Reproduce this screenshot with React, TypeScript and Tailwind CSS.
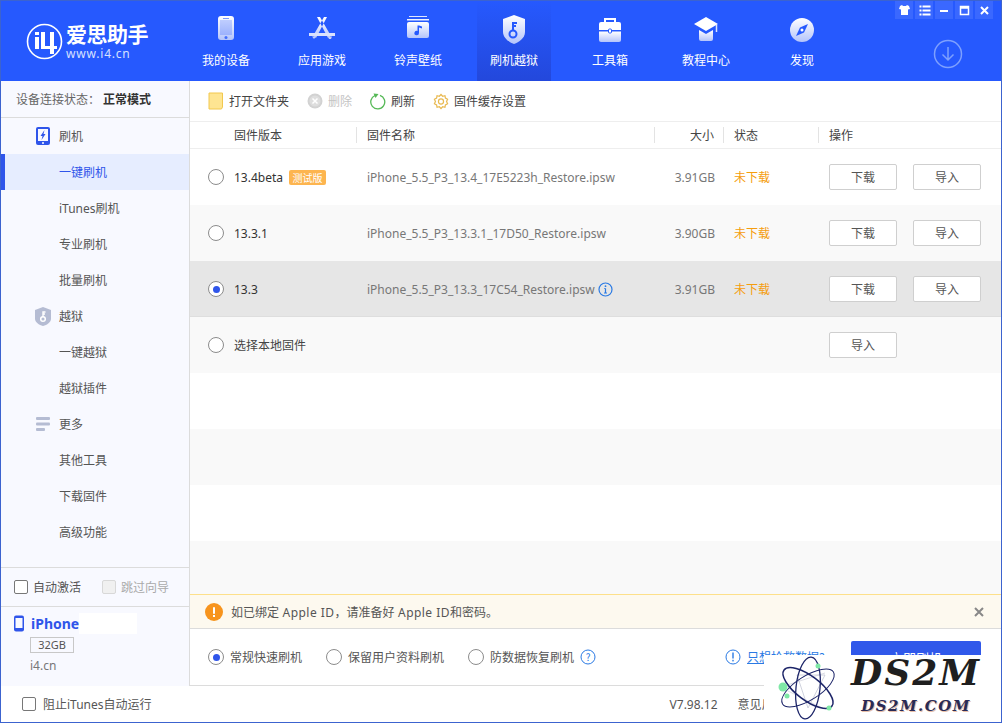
import React from "react";

const font = { fontFamily: '"Noto Sans CJK SC", "Noto Sans", sans-serif' };

function L({ children, cls = "" }: { children: React.ReactNode; cls?: string }) {
  return <span className={`font-['Noto_Sans'] ${cls}`}>{children}</span>;
}

function G({ id }: { id: string }) {
  return (
    <defs>
      <linearGradient id={id} x1="0" y1="0" x2="0" y2="1">
        <stop offset="0" stopColor="#ffffff" />
        <stop offset="1" stopColor="#b4c4fb" />
      </linearGradient>
    </defs>
  );
}

const navIcons: React.ReactNode[] = [
  <svg key="a" width="32" height="32" viewBox="0 0 32 32">
    <G id="g1" />
    <rect x="8" y="2" width="16" height="24" rx="3" fill="url(#g1)" />
    <rect x="10" y="6" width="12" height="15" fill="#2659fe" opacity=".25" />
    <rect x="13" y="4" width="6" height="1" fill="#2659fe" opacity=".6" />
    <circle cx="16" cy="23.500" r="1.500" fill="#2659fe" opacity=".8" />
  </svg>,
  <svg key="b" width="32" height="32" viewBox="0 0 32 32" fill="none">
    <G id="g2" />
    <path d="M11 3l3 0 11 19-3 2zM21 3l-3 0L7 22l3 2z" fill="url(#g2)" />
    <path d="M3 19h26v3H3z" fill="#d9e1fd" />
    <path d="M6 22.500h4l-2 2.500zM22 22.500h4l-1 2.500h-2z" fill="#c2cefc" />
  </svg>,
  <svg key="c" width="32" height="32" viewBox="0 0 32 32">
    <G id="g3" />
    <rect x="7" y="2" width="18" height="1" fill="#dfe6ff" />
    <rect x="5" y="5" width="22" height="1.500" fill="#eef2ff" />
    <rect x="5" y="8" width="22" height="16" rx="2" fill="url(#g3)" />
    <path d="M17 11.500v7.500a2.300 2.300 0 1 1-1.500-2.100v-5.400zM17 11.500l3 1v2l-3-1z" fill="#2659fe" />
  </svg>,
  <svg key="d" width="32" height="32" viewBox="0 0 32 32">
    <G id="g4" />
    <path d="M16 1l11 4v13c0 6-6 10-11 12C11 28 5 24 5 18V5z" fill="url(#g4)" />
    <circle cx="15" cy="20" r="3.500" fill="none" stroke="#2659fe" strokeWidth="2" />
    <path d="M15 16V8M15 9h4M15 12h3" stroke="#2659fe" strokeWidth="2" />
  </svg>,
  <svg key="e" width="32" height="32" viewBox="0 0 32 32">
    <G id="g5" />
    <path d="M11 9V5h10v4" fill="none" stroke="#fff" strokeWidth="2" />
    <path d="M5 10a2 2 0 0 1 2-2h18a2 2 0 0 1 2 2v6H5z" fill="#fff" />
    <path d="M5 17.500h22V26a2 2 0 0 1-2 2H7a2 2 0 0 1-2-2z" fill="url(#g5)" />
    <rect x="14.500" y="15" width="3" height="4" rx="1" fill="#fff" stroke="#2659fe" />
  </svg>,
  <svg key="f" width="32" height="32" viewBox="0 0 32 32">
    <G id="g6" />
    <path d="M9 16v9a2 2 0 0 0 2 2h10a2 2 0 0 0 2-2v-9l-7 4z" fill="url(#g6)" />
    <path d="M16 3L4 10l12 7 12-7z" fill="#fff" />
    <path d="M26.500 11v7" stroke="#dbe3fe" strokeWidth="1.500" />
  </svg>,
  <svg key="g" width="32" height="32" viewBox="0 0 32 32">
    <G id="g7" />
    <circle cx="16" cy="16" r="12" fill="url(#g7)" />
    <path d="M22 10l-8 3.500-4 8.500 8-3.500z" fill="#2659fe" />
    <circle cx="16" cy="16" r="1.500" fill="#fff" />
  </svg>,
];

const nav = ["我的设备", "应用游戏", "铃声壁纸", "刷机越狱", "工具箱", "教程中心", "发现"];

function Radio({ on }: { on?: boolean }) {
  return (
    <span className="flex h-[16px] w-[16px] shrink-0 items-center justify-center rounded-full border border-[#8c8c8c] bg-white">
      {on && <span className="h-[7px] w-[7px] rounded-full bg-[#2f55ea]" />}
    </span>
  );
}

function Btn({ children }: { children: React.ReactNode }) {
  return (
    <span className="flex h-[26px] w-[68px] items-center justify-center rounded-[2px] border border-[#cfcfcf] bg-white text-[12px] text-[#555]">
      {children}
    </span>
  );
}

function Row({
  bg,
  ver,
  name,
  size,
  on,
  beta,
  info,
}: {
  bg: string;
  ver: string;
  name: string;
  size: string;
  on?: boolean;
  beta?: boolean;
  info?: boolean;
}) {
  return (
    <div className={`flex h-[56px] shrink-0 items-center text-[12px] ${bg}`}>
      <div className="flex w-[177px] items-center pl-[18px]">
        <Radio on={on} />
        <span className="ml-[10px] text-[#333]"><L>{ver}</L></span>
        {beta && (
          <span className="ml-[6px] rounded-[2px] bg-[#fdb54f] px-[3.500px] text-[10px] leading-[15px] text-white">测试版</span>
        )}
      </div>
      <div className="flex w-[286px] items-center text-[#777]">
        <span><L>{name}</L></span>
        {info && (
          <svg className="ml-[3px]" width="15" height="15" viewBox="0 0 15 15" fill="none">
            <circle cx="7.500" cy="7.500" r="6.500" stroke="#2a7ae4" strokeWidth="1.200" />
            <path d="M7.500 6.500v4.500M6 11h3M6.300 6.500h1.200" stroke="#2a7ae4" strokeWidth="1.200" />
            <circle cx="7.500" cy="4.200" r="0.900" fill="#2a7ae4" />
          </svg>
        )}
      </div>
      <div className="w-[62px] text-right text-[#777]"><L>{size}</L></div>
      <div className="ml-[19px] w-[95px] text-[#f59d0e]">未下载</div>
      <div className="flex gap-[16px]">
        <Btn>下载</Btn>
        <Btn>导入</Btn>
      </div>
    </div>
  );
}

function SideHead({ icon, label }: { icon: React.ReactNode; label: string }) {
  return (
    <div className="flex h-[36px] items-center text-[12px] text-[#555]">
      <span className="flex w-[58px] justify-center pl-[25px]">{icon}</span>
      <span>{label}</span>
    </div>
  );
}

function SideItem({ label, active }: { label: React.ReactNode; active?: boolean }) {
  return (
    <div
      className={`flex h-[36px] items-center text-[12px] ${
        active ? "border-l-[4px] border-[#2f55ea] bg-[#e6edff] pl-[54px] text-[#2f55ea]" : "pl-[58px] text-[#555]"
      }`}
    >
      <span>{label}</span>
    </div>
  );
}

function Tool({ icon, label, cls }: { icon: React.ReactNode; label: string; cls: string }) {
  return (
    <div className="flex items-center gap-[5px]">
      {icon}
      <span className={`text-[12px] ${cls}`}>{label}</span>
    </div>
  );
}

function Th({ w, label, cls = "" }: { w: string; label: string; cls?: string }) {
  return (
    <div className={`${w} flex h-[16px] items-center border-r border-[#e3e3e3] text-[12px] text-[#444] ${cls}`}>{label}</div>
  );
}

export default function App() {
  return (
    <div
      style={font}
      className="relative flex h-[723px] w-[1002px] flex-col overflow-hidden border border-[#3c63cf] bg-white"
    >
      {/* header */}
      <header className="flex h-[80px] shrink-0 bg-[#2659fe]">
        <div className="flex w-[188px] shrink-0 items-center pl-[25px]">
          <svg width="37" height="37" viewBox="0 0 37 37" fill="none">
            <circle cx="18.500" cy="18.500" r="17" stroke="#fff" strokeWidth="1.600" />
            <path d="M9 14h4v12H9zM9 9h4v3H9z" fill="#fff" />
            <path d="M15 9v17h9v5h4v-5h3v-3h-3V9h-4v14h-5V9z" fill="#fff" />
          </svg>
          <div className="ml-[3px] flex flex-col">
            <span className="text-[21px] font-bold leading-[25px] tracking-[-0.5px] text-white">爱思助手</span>
            <span className="text-[12px] leading-[14px] tracking-[0.8px] text-[#d6e0ff]"><L>www.i4.cn</L></span>
          </div>
        </div>
        <nav className="flex gap-[22px]">
          {nav.map((n, i) => (
            <div
              key={n}
              className={`flex h-[80px] w-[74px] flex-col items-center pt-[13px] ${
                i === 3 ? "bg-gradient-to-b from-[#2659fe] to-[#2348dc]" : ""
              }`}
            >
              {navIcons[i]}
              <span className="mt-[5px] text-[12px] leading-[18px] text-white">{n}</span>
            </div>
          ))}
        </nav>
        <div className="ml-auto flex flex-col items-end pr-[8px]">
          <div className="flex gap-[2px]">
            {[
              <path key="1" d="M4 4l2-1 1 1h3l1-1 2 1 1 3-2 .5V13H5V7.500L3 7z" fill="#fff" />,
              <path key="2" d="M4 4h2v2H4zM7 4h8v2H7zM4 8h2v2H4zM7 8h8v2H7zM4 12h2v2H4zM7 12h8v2H7z" fill="#fff" transform="translate(-.5 -.5)" />,
              <path key="3" d="M4 8h8v2H4z" fill="#fff" />,
              <path key="4" d="M4.500 4.500h8v8h-8zM4.500 6h8" fill="none" stroke="#fff" strokeWidth="1.500" />,
              <path key="5" d="M5 5l7 7M12 5l-7 7" stroke="#fff" strokeWidth="2" />,
            ].map((p, i) => (
              <span key={i} className="flex h-[18px] w-[18px] items-center justify-center bg-[#3a68ff]">
                <svg width="17" height="17" viewBox="0 0 17 17">
                  {p}
                </svg>
              </span>
            ))}
          </div>
          <svg className="mr-[30px] mt-[20px]" width="30" height="30" viewBox="0 0 30 30" fill="none" stroke="#7ea0fe" strokeWidth="1.500">
            <circle cx="15" cy="15" r="13.500" />
            <path d="M15 8v13M9.500 15.500L15 21l5.500-5.500" />
          </svg>
        </div>
      </header>

      <div className="flex min-h-0 flex-1">
        {/* sidebar */}
        <aside className="flex w-[189px] shrink-0 flex-col border-r border-[#dcdcdc] bg-[#f8f9ff]">
          <div className="flex h-[37px] shrink-0 items-center border-b border-[#dcdcdc] pl-[15px] text-[12px] text-[#666]">
            设备连接状态：<span className="ml-[3px] font-bold text-[#333]">正常模式</span>
          </div>
          <div className="flex-1">
            <SideHead
              label="刷机"
              icon={
                <svg width="16" height="20" viewBox="0 0 16 20">
                  <rect x="1" y="1" width="14" height="18" rx="2" fill="#2f55ea" />
                  <rect x="3" y="3" width="10" height="12" fill="#f8f9ff" />
                  <path d="M9.500 4L5.500 10h2l-1 4 4-6h-2z" fill="#2f55ea" />
                  <circle cx="8" cy="17" r="1" fill="#fff" />
                </svg>
              }
            />
            <SideItem label="一键刷机" active />
            <SideItem label={<><L>iTunes</L>刷机</>} />
            <SideItem label="专业刷机" />
            <SideItem label="批量刷机" />
            <SideHead
              label="越狱"
              icon={
                <svg width="16" height="19" viewBox="0 0 16 19">
                  <path d="M8 0l8 3v9c0 3-4 6-8 7-4-1-8-4-8-7V3z" fill="#b5bcd3" />
                  <circle cx="8" cy="12" r="2.300" fill="none" stroke="#fff" strokeWidth="1.500" />
                  <path d="M8 10V5h2.500M8 7h2" stroke="#fff" strokeWidth="1.400" fill="none" />
                </svg>
              }
            />
            <SideItem label="一键越狱" />
            <SideItem label="越狱插件" />
            <SideHead
              label="更多"
              icon={
                <svg width="14" height="14" viewBox="0 0 14 14" fill="#b5bcd3">
                  <rect x="0" y="0" width="14" height="3" rx="1" />
                  <rect x="0" y="5.500" width="14" height="3" rx="1" />
                  <rect x="0" y="11" width="9" height="3" rx="1" />
                </svg>
              }
            />
            <SideItem label="其他工具" />
            <SideItem label="下载固件" />
            <SideItem label="高级功能" />
          </div>
          <div className="flex h-[39px] shrink-0 items-center border-t border-[#dcdcdc] pl-[13px] text-[12px]">
            <span className="h-[14px] w-[14px] rounded-[2px] border border-[#777] bg-white" />
            <span className="ml-[5px] text-[#555]">自动激活</span>
            <span className="ml-[21px] h-[14px] w-[14px] rounded-[2px] border border-[#d8d8d8] bg-[#f0f0f0]" />
            <span className="ml-[5px] text-[#aaa]">跳过向导</span>
          </div>
          <div className="flex h-[80px] shrink-0 flex-col border-t border-[#dcdcdc] pl-[12px] pt-[6px]">
            <div className="flex items-center">
              <svg width="12" height="17" viewBox="0 0 12 17">
                <rect x="1" y="0.500" width="10" height="16" rx="2" fill="#2f55ea" />
                <rect x="2.500" y="3" width="7" height="10" fill="#f8f9ff" />
              </svg>
              <span className="ml-[6px] text-[14px] font-bold leading-[21px] text-[#2f55ea]"><L>iPhone</L></span>
              <span className="h-[21px] w-[58px] bg-white" />
            </div>
            <span className="ml-[17px] mt-[3px] flex h-[16px] w-[44px] items-center justify-center border border-[#c8c8c8] text-[11px] text-[#555]"><span><L>32GB</L></span></span>
            <span className="ml-[17px] mt-[4px] text-[12px] leading-[16px] text-[#777]"><L>i4.cn</L></span>
          </div>
        </aside>

        {/* main */}
        <main className="flex min-w-0 flex-1 flex-col">
          <div className="flex h-[40px] shrink-0 items-center gap-[18px] pl-[18px]">
            <Tool
              label="打开文件夹"
              cls="text-[#444]"
              icon={
                <svg width="16" height="18" viewBox="0 0 16 18">
                  <path d="M1 1h13.500v14l-1 2H1z" fill="#fee592" stroke="#f2c84f" />
                </svg>
              }
            />
            <Tool
              label="删除"
              cls="text-[#c4c4c4]"
              icon={
                <svg width="16" height="16" viewBox="0 0 16 16">
                  <circle cx="8" cy="8" r="7.500" fill="#d2d2d2" />
                  <circle cx="8" cy="8" r="5.500" fill="#dedede" />
                  <path d="M5.500 5.500l5 5M10.500 5.500l-5 5" stroke="#fff" strokeWidth="1.500" />
                </svg>
              }
            />
            <Tool
              label="刷新"
              cls="text-[#444]"
              icon={
                <svg width="16" height="17" viewBox="0 0 16 17" fill="none">
                  <path d="M5 2.500a7 7 0 1 0 5-.200" stroke="#56b957" strokeWidth="1.300" />
                  <path d="M3.500 0.500l5 .5-3 4z" fill="#56b957" />
                </svg>
              }
            />
            <Tool
              label="固件缓存设置"
              cls="text-[#444]"
              icon={
                <svg width="16" height="17" viewBox="0 0 17 17" fill="none" stroke="#e9ba52" strokeWidth="1.300">
                  <path d="M8.500 1l1.700 1.900 2.500-.5.500 2.500 2.300 1.200-1.100 2.400 1.100 2.400-2.300 1.200-.5 2.500-2.500-.5L8.500 16l-1.700-1.900-2.500.5-.5-2.500L1.500 10.900l1.100-2.400L1.500 6.100l2.300-1.200.5-2.500 2.500.5z" />
                  <circle cx="8.500" cy="8.500" r="2.700" />
                </svg>
              }
            />
          </div>
          <div className="flex h-[28px] shrink-0 items-center border-b border-t border-[#eeeeee] pl-[44px]">
            <Th w="w-[123px]" label="固件版本" />
            <Th w="w-[298px]" label="固件名称" cls="pl-[10px]" />
            <Th w="w-[69px]" label="大小" cls="justify-end pr-[9px]" />
            <Th w="w-[95px]" label="状态" cls="pl-[10px]" />
            <div className="pl-[10px] text-[12px] text-[#444]">操作</div>
          </div>

          <Row bg="bg-white" ver="13.4beta" beta name="iPhone_5.5_P3_13.4_17E5223h_Restore.ipsw" size="3.91GB" />
          <Row bg="bg-[#f9f9f9]" ver="13.3.1" name="iPhone_5.5_P3_13.3.1_17D50_Restore.ipsw" size="3.90GB" />
          <Row bg="bg-[#e6e6e6] border-b border-[#dedede] pt-[1px]" ver="13.3" on info name="iPhone_5.5_P3_13.3_17C54_Restore.ipsw" size="3.91GB" />
          <div className="flex h-[56px] shrink-0 items-center bg-[#f9f9f9] text-[12px]">
            <div className="flex w-[639px] items-center pl-[18px]">
              <Radio />
              <span className="ml-[10px] text-[#444]">选择本地固件</span>
            </div>
            <Btn>导入</Btn>
          </div>
          <div className="h-[56px] shrink-0 bg-white" />
          <div className="h-[56px] shrink-0 bg-[#f9f9f9]" />
          <div className="h-[56px] shrink-0 bg-white" />
          <div className="flex-1 bg-[#f9f9f9]" />

          <div className="flex h-[35px] shrink-0 items-center border-b border-t border-b-[#dcdcdc] border-t-[#fde08a] bg-[#fdf9ef] pl-[15px] pr-[17px] pt-[1px]">
            <svg width="18" height="18" viewBox="0 0 18 18">
              <circle cx="9" cy="9" r="9" fill="#f7941d" />
              <rect x="8" y="4" width="2" height="7" rx="1" fill="#fff" />
              <rect x="8" y="12" width="2" height="2" fill="#fff" />
            </svg>
            <span className="ml-[8px] text-[12px] text-[#555]">
              如已绑定<L cls="tracking-[0.45px]"> Apple ID</L>，请准备好<L cls="tracking-[0.45px]"> Apple ID</L>和密码。
            </span>
            <svg className="ml-auto" width="10" height="10" viewBox="0 0 10 10">
              <path d="M1 1l8 8M9 1l-8 8" stroke="#888" strokeWidth="2" />
            </svg>
          </div>
          <div className="flex h-[57px] shrink-0 items-center border-b border-[#dcdcdc] pl-[18px] text-[12px] text-[#555]">
            <Radio on />
            <span className="ml-[6px]">常规快速刷机</span>
            <span className="ml-[24px]"><Radio /></span>
            <span className="ml-[6px]">保留用户资料刷机</span>
            <span className="ml-[24px]"><Radio /></span>
            <span className="ml-[6px]">防数据恢复刷机</span>
            <svg className="ml-[6px]" width="16" height="16" viewBox="0 0 16 16" fill="none">
              <circle cx="8" cy="8" r="7" stroke="#2a7ae4" />
              <text x="8" y="11.500" textAnchor="middle" fontSize="10" fill="#2a7ae4">?</text>
            </svg>
            <svg className="ml-[129px]" width="16" height="16" viewBox="0 0 16 16" fill="none">
              <circle cx="8" cy="8" r="7" stroke="#2a7ae4" />
              <rect x="7.300" y="3.500" width="1.400" height="6" fill="#2a7ae4" />
              <rect x="7.300" y="10.800" width="1.400" height="1.600" fill="#2a7ae4" />
            </svg>
            <span className="ml-[6px] text-[#2a7ae4] underline">只想抢救数据?</span>
            <span className="ml-auto mr-[20px] flex h-[45px] w-[130px] translate-y-[6px] items-start justify-center rounded-[2px] bg-[#3058ea] pt-[7px] text-[13px] text-white">
              立即刷机
            </span>
          </div>
        </main>
      </div>

      {/* footer */}
      <footer className="flex h-[36px] shrink-0 items-center bg-white pl-[21px] text-[12px] text-[#555]">
        <span className="h-[14px] w-[14px] rounded-[2px] border border-[#777]" />
        <span className="ml-[7px]">阻止<L>iTunes</L>自动运行</span>
        <span className="ml-[518px]"><L>V7.98.12</L></span>
        <span className="ml-[20px]">意见反馈</span>
      </footer>

      {/* watermark */}
      <div className="absolute bottom-[-1px] right-[-1px] flex h-[68px] w-[238px] items-start bg-white">
        <svg className="ml-[6px] shrink-0" width="70" height="68" viewBox="0 0 70 68" fill="none">
          <path d="M27 20h28L38 53z" stroke="#c4c6d4" strokeWidth="0.800" />
          <path d="M17 30l38-12M18 36l36 18" stroke="#c4c6d4" strokeWidth="0.600" />
          <g stroke="#1c2468" strokeWidth="1.500">
            <ellipse cx="38" cy="33" rx="30" ry="12" transform="rotate(37 38 33)" />
            <ellipse cx="38" cy="33" rx="31" ry="12" transform="rotate(96 38 33)" strokeWidth="1.300" />
            <ellipse cx="38" cy="33" rx="30" ry="12" transform="rotate(148 38 33)" strokeWidth="1" />
          </g>
          <circle cx="13" cy="32" r="4.500" fill="#7fe8a6" />
          <circle cx="17" cy="41" r="2.500" fill="#7fe8a6" />
          <circle cx="48" cy="11" r="2.500" fill="#7fe8a6" />
          <circle cx="59" cy="53" r="2.500" fill="#7fe8a6" />
        </svg>
        <div className="ml-[3px] flex w-[146px] flex-col items-center pt-[2px]" style={{ fontFamily: '"DejaVu Serif", serif' }}>
          <span className="text-[36px] font-bold italic leading-[30px] tracking-[2px] text-[#1f1f1f]">DS2M</span>
          <span className="mt-[9px] text-[15px] font-bold italic leading-[20px] tracking-[1.500px] text-[#2a2a55] [text-shadow:1px_1px_0_#e8bfa8]">DS2M.COM</span>
        </div>
      </div>
    </div>
  );
}
